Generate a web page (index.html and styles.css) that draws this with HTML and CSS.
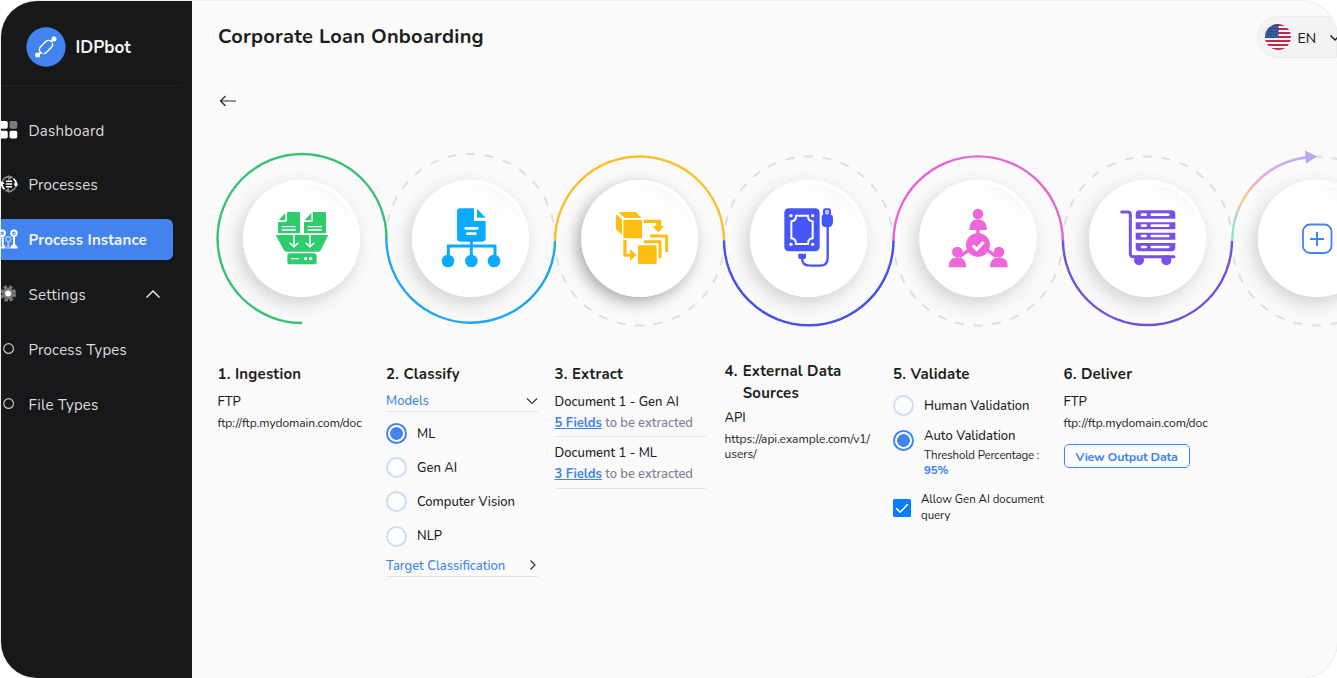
FILE: index.html
```html
<!DOCTYPE html>
<html lang="en">
<head>
<meta charset="utf-8">
<title>Corporate Loan Onboarding</title>
<link rel="stylesheet" href="styles.css">
</head>
<body>
<div class="app">
  <aside class="sidebar">
    <div class="brand">
      <svg class="brand-logo" viewBox="0 0 120 120">
        <circle cx="60" cy="60" r="59" fill="#4283ee"/>
        <g fill="none" stroke="#fff" stroke-width="4.500" stroke-linecap="round" transform="rotate(-45 60 60)">
          <rect x="37" y="48" width="46" height="24" rx="12" stroke-dasharray="40 7"/>
          <path d="M29 60h8M83 60h8"/>
        </g>
        <circle cx="35" cy="84" r="7.500" fill="#fff"/><circle cx="84" cy="36" r="7.500" fill="#fff"/>
      </svg>
      <span class="brand-name">IDPbot</span>
    </div>
    <nav class="nav">
      <a class="nav-item">
        <svg class="nav-icon" viewBox="0 0 20 20"><g fill="#fff"><rect x="0" y="0" width="8.600" height="8.600" rx="2"/><rect x="0" y="10.800" width="8.600" height="8.600" rx="2"/><rect x="10.600" y="10.800" width="8.600" height="8.600" rx="2"/></g><rect x="10.600" y="0" width="8.600" height="8.600" rx="2" fill="#7b7c7d"/></svg>
        <span>Dashboard</span></a>
      <a class="nav-item">
        <svg class="nav-icon" viewBox="0 0 20 20" fill="none" stroke-width="2"><path d="M3 6A8 8 0 0 1 14 3M17 14A8 8 0 0 1 6 17" stroke="#88898a"/><path d="M15 4a8 8 0 0 1 3 7M5 16a8 8 0 0 1-3-7" stroke="#fff"/><path d="M9 0l4 3-4 3zM10 14v6l-4-3z" fill="#88898a"/><path d="M15 9.500h5.500l-2.800 4.500zM0 10h5L2.500 6z" fill="#fff"/><path d="M6.500 7h7M6.500 10h7M6.500 13h7" stroke="#fff" stroke-width="1.600"/></svg>
        <span>Processes</span></a>
      <a class="nav-item active">
        <svg class="nav-icon tall" viewBox="0 0 20 22" fill="none" stroke="#fff"><circle cx="2.500" cy="4" r="3" stroke-width="2.200"/><circle cx="15.500" cy="4" r="3" stroke-width="2.200"/><path d="M3 7v11M15.500 7v11M0 20h6M12 20h7.500M3 17l2.500 2.500M15.500 16.500l3 3M15.500 16.500l-3 3" stroke-width="2.200"/><g stroke="#9dbdf7"><circle cx="9.300" cy="10.500" r="2.700" stroke-width="1.900"/><path d="M9.300 13v7M7 20h4.500" stroke-width="2.400"/></g><path d="M1.500 4l1 1 2-2M14.500 4l1 1 2-2" stroke-width=".8"/></svg>
        <span>Process Instance</span></a>
      <a class="nav-item">
        <svg class="nav-icon" viewBox="0 0 20 20"><circle cx="9" cy="9.500" r="6.400" fill="#77787a"/><circle cx="9" cy="9.500" r="7" fill="none" stroke="#77787a" stroke-width="4" stroke-dasharray="3.600 1.900"/><circle cx="9" cy="9.500" r="3.300" fill="#fff"/></svg>
        <span>Settings</span>
        <svg class="nav-caret" viewBox="0 0 16 10"><path d="M1.500 8.500L8 2l6.500 6.500" fill="none" stroke="#e5e5e6" stroke-width="1.500"/></svg></a>
      <a class="nav-item">
        <svg class="nav-icon" viewBox="0 0 20 20"><circle cx="9.600" cy="9.500" r="5.400" fill="none" stroke="#c9c9ca" stroke-width="1.300"/></svg>
        <span>Process Types</span></a>
      <a class="nav-item">
        <svg class="nav-icon" viewBox="0 0 20 20"><circle cx="9.600" cy="9.500" r="5.400" fill="none" stroke="#c9c9ca" stroke-width="1.300"/></svg>
        <span>File Types</span></a>
    </nav>
  </aside>

  <main class="main">
    <header class="topbar">
      <h1 class="title">Corporate Loan Onboarding</h1>
      <div class="lang">
        <svg class="flag" viewBox="0 0 26 26">
          <defs><clipPath id="flagClip"><circle cx="13" cy="13" r="13"/></clipPath></defs>
          <g clip-path="url(#flagClip)">
            <rect width="26" height="26" fill="#f7f3f5"/>
            <path d="M0 1h26M0 5h26M0 9h26M0 13h26M0 17h26M0 21h26M0 25h26" stroke="#c0294a" stroke-width="2"/>
            <rect width="13.500" height="14" fill="#2b4c8c"/>
            <path d="M3 3h10M2 6h11M1 9h12M1 12h12" stroke="#8fa5cc" stroke-width=".9" stroke-dasharray="1 1.800"/>
          </g>
        </svg>
        <span class="lang-code">EN</span>
        <svg class="lang-caret" viewBox="0 0 12 8"><path d="M1.500 1.500L6 6l4.500-4.500" fill="none" stroke="#222" stroke-width="1.500"/></svg>
      </div>
    </header>
    <svg class="back" viewBox="0 0 18 14" fill="none" stroke="#28292b" stroke-width="1.200"><path d="M17 7H1.500M6.500 2L1.500 7l5 5"/></svg>

    <svg class="flow" viewBox="192 140 1145 200" fill="none">
      <defs>
        <filter id="drop" x="-40%" y="-40%" width="180%" height="180%"><feDropShadow dx="-4" dy="6" stdDeviation="8.500" flood-color="#000" flood-opacity=".17"/></filter>
        <filter id="dropStrong" x="-40%" y="-40%" width="180%" height="180%"><feDropShadow dx="-4" dy="5" stdDeviation="7.500" flood-color="#000" flood-opacity=".32"/></filter>
        <linearGradient id="bevel" x1=".75" y1="0" x2=".35" y2=".6"><stop offset="0" stop-color="#f6f6f6"/><stop offset=".3" stop-color="#fff"/></linearGradient>
        <linearGradient id="rainbow" gradientUnits="userSpaceOnUse" x1="1232" y1="241" x2="1310" y2="157"><stop offset="0" stop-color="#93e8b8"/><stop offset=".18" stop-color="#a9d3ee"/><stop offset=".34" stop-color="#f8cd84"/><stop offset=".56" stop-color="#f2a5c8"/><stop offset=".78" stop-color="#c9aef3"/><stop offset="1" stop-color="#b9a5f4"/></linearGradient>
        <g id="disc"><circle r="58.500" fill="#fff"/><circle r="55" fill="url(#bevel)"/></g>
      </defs>
      <g>
        <use href="#disc" x="301.500" y="238.500" filter="url(#drop)"/>
        <use href="#disc" x="470.500" y="238.500" filter="url(#drop)"/>
        <use href="#disc" x="639.700" y="238.500" filter="url(#dropStrong)"/>
        <use href="#disc" x="808.500" y="238.500" filter="url(#drop)"/>
        <use href="#disc" x="978" y="238.500" filter="url(#drop)"/>
        <use href="#disc" x="1147.500" y="238.500" filter="url(#drop)"/>
        <use href="#disc" x="1316.500" y="238.500" filter="url(#drop)"/>
      </g>
      <g stroke="#dedede" stroke-width="2" stroke-dasharray="9 9.700" stroke-dashoffset="2.800">
        <path d="M386 238.500a84.500 84.500 0 0 1 169 0M555 241a84.500 84.500 0 0 0 169 0M724 241a84.500 84.500 0 0 1 169 0M893.500 241a84.500 84.500 0 0 0 169 0M1063 241a84.500 84.500 0 0 1 169 0M1232 241a84.500 84.500 0 0 0 169 0"/>
        <path d="M1316 156.500a84.500 84.500 0 0 1 60 25"/>
      </g>
      <g stroke-width="2.400">
        <path d="M302 323a84.500 84.500 0 1 1 84.500-84.500" stroke="#36c270"/>
        <path d="M386.300 238A84.300 84.700 0 0 0 470.600 322.700A84.400 82.200 0 0 0 555 240.500" stroke="#1fa6f2"/>
        <path d="M555 241a84.500 84.500 0 0 1 169 0" stroke="#f9bf2a"/>
        <path d="M724 240.500a84.700 84.700 0 0 0 169.500 0" stroke="#4551e8"/>
        <path d="M893.500 241a84.500 84.500 0 0 1 169.300 0" stroke="#e765d2"/>
        <path d="M1063 240.500a84.500 84.500 0 0 0 169 0" stroke="#7150dc"/>
        <path d="M1232.300 241A84.500 84.500 0 0 1 1306 157.500" stroke="url(#rainbow)"/>
      </g>
      <path d="M1305 150.500l12 6-11 7z" fill="#b9a5f4"/>

      <g transform="translate(210 140) scale(.33333)">
        <path d="M231 216h35q4 0 4 4v60h-66v-34h21q6 0 6-6zM226 219v22h-20zM309 216h35q4 0 4 4v60h-66v-34h21q6 0 6-6zM304 219v22h-20z" fill="#2fcb6c"/>
        <path d="M197 285h158l-23 46q-2 4-7 4h-96q-5 0-7-4z" fill="#2fcb6c"/>
        <rect x="232" y="340" width="88" height="33" rx="8" fill="#2fcb6c"/>
        <path d="M215 260h42M215 270h42M293 260h42M293 270h42M243 356h24" stroke="#fff" stroke-width="4"/>
        <path d="M252 283v37M239 308l13 13 13-13M300 283v37M287 308l13 13 13-13" stroke="#fff" stroke-width="4.500"/>
        <circle cx="287" cy="356" r="5" fill="#fff"/><circle cx="302" cy="356" r="5" fill="#fff"/>
      </g>
      <g transform="translate(380 140) scale(.33333)">
        <path d="M241 205h41v38h35v52q0 10-10 10h-66q-10 0-10-10v-80q0-10 10-10zM291 206l26 27h-26z" fill="#0baaff"/>
        <path d="M257 265h35M262 281h24" stroke="#fff" stroke-width="8" stroke-linecap="round"/>
        <path d="M274 300v54M205 354v-36h140v36" stroke="#0baaff" stroke-width="9"/>
        <g fill="#0baaff"><circle cx="204" cy="363" r="19"/><circle cx="274" cy="363" r="19"/><circle cx="342" cy="363" r="19"/></g>
      </g>
      <g transform="translate(550 140) scale(.33333)" fill="#fdbd13">
        <path d="M205 216h53l16 18h-50zM198 222l18 17v45l-16-14q-2-2-2-5z"/>
        <rect x="220" y="239" width="56" height="56" rx="4"/>
        <rect x="264" y="316" width="56" height="56" rx="4"/>
        <path d="M281 239h48q5 0 5 5v14h9l-18 19-18-19h12v-9h-38zM220 300h10v41h10v-14l19 18-19 18v-13h-15q-5 0-5-5z"/>
        <path d="M282 305h48v50M300 288h50v48" fill="none" stroke="#fdbd13" stroke-width="9" stroke-linejoin="round"/>
      </g>
      <g transform="translate(720 140) scale(.33333)">
        <rect x="193" y="205" width="106" height="129" rx="13" fill="#4655f6"/>
        <path d="M228 227h36q0 16 14 17v51q-14 1-14 17h-36q0-16-14-17v-51q14-1 14-17z" stroke="#fff" stroke-width="6"/>
        <g fill="#fff"><circle cx="213" cy="227" r="5"/><circle cx="278" cy="227" r="5"/><circle cx="213" cy="313" r="5"/><circle cx="278" cy="313" r="5"/></g>
        <path d="M235 341h23v11q0 5-5 5h-13q-5 0-5-5z" fill="#4655f6"/>
        <path d="M246 354q0 23 24 23h29q24 0 24-24v-98" stroke="#4655f6" stroke-width="7"/>
        <path d="M309 224v-12q0-7 7-7h10q7 0 7 7v12q6 1 6 8v13q0 17-18 17t-16-17v-13q0-7 4-8z" fill="#4655f6"/>
        <rect x="316" y="211" width="10" height="12" rx="3" fill="#fff"/><circle cx="321" cy="217" r="2.500" fill="#4655f6"/>
      </g>
      <g transform="translate(888 140) scale(.33333)">
        <path d="M270 260v50l-55 40M270 310l55 40" stroke="#ec67d8" stroke-width="10"/>
        <g fill="#ec67d8"><circle cx="270" cy="315" r="36"/>
        <circle cx="270" cy="222" r="16"/><path d="M244 270q0-32 26-32t27 32z"/>
        <circle cx="208" cy="336" r="16"/><path d="M182 382q0-30 26-30t27 30z"/>
        <circle cx="333" cy="336" r="16"/><path d="M306 382q0-30 27-30t26 30z"/></g>
        <path d="M254 316l12 12 21-22" stroke="#fff" stroke-width="9"/>
      </g>
      <g transform="translate(1057 140) scale(.33333)">
        <path d="M194 216h19q7 0 7 8v117q0 9 9 9h122" stroke="#7651e4" stroke-width="9" stroke-linecap="round"/>
        <path d="M247 211h97q11 0 11 11v14H236v-14q0-11 11-11zM236 247h119v21H236zM236 278h119v21H236zM236 309h119v13q0 12-11 12h-97q-11 0-11-12z" fill="#7651e4"/>
        <path d="M255 224h11M284 224h50M255 257h11M284 257h50M255 288h11M284 288h50M255 321h11M284 321h50" stroke="#fff" stroke-width="8" stroke-linecap="round"/>
        <circle cx="246" cy="361" r="15" fill="#7651e4"/><circle cx="328" cy="361" r="15" fill="#7651e4"/>
      </g>
      <g stroke="#4283ee" stroke-width="1.800"><rect x="1303" y="224.500" width="28.500" height="28.500" rx="7"/><path d="M1317 232v14M1310 239h14" stroke-width="2"/></g>
    </svg>

    <section class="steps">
      <div class="step">
        <h2 class="step-title">1. Ingestion</h2>
        <p class="kind">FTP</p>
        <p class="url">ftp://ftp.mydomain.com/doc</p>
      </div>
      <div class="step">
        <h2 class="step-title">2. Classify</h2>
        <div class="fold"><span>Models</span><svg class="caret-down" viewBox="0 0 12 8"><path d="M1 1.500l5 5 5-5" fill="none" stroke="#333" stroke-width="1.200"/></svg></div>
        <div class="options">
          <div class="option"><i class="radio on"></i><span>ML</span></div>
          <div class="option"><i class="radio"></i><span>Gen AI</span></div>
          <div class="option"><i class="radio"></i><span>Computer Vision</span></div>
          <div class="option"><i class="radio"></i><span>NLP</span></div>
        </div>
        <div class="fold target"><span>Target Classification</span><svg class="caret-right" viewBox="0 0 8 12"><path d="M1.500 1.500L6 6l-4.500 4.500" fill="none" stroke="#333" stroke-width="1.200"/></svg></div>
      </div>
      <div class="step">
        <h2 class="step-title">3. Extract</h2>
        <div class="doc first"><p>Document 1 - Gen AI</p><p class="doc-info"><a class="fields">5 Fields</a> to be extracted</p></div>
        <div class="doc"><p>Document 1 - ML</p><p class="doc-info"><a class="fields">3 Fields</a> to be extracted</p></div>
      </div>
      <div class="step external">
        <h2 class="step-title wrap"><span>4.</span><span>External Data Sources</span></h2>
        <p class="kind api">API</p>
        <p class="url">https://api.example.com/v1/<br>users/</p>
      </div>
      <div class="step">
        <h2 class="step-title">5. Validate</h2>
        <div class="check-row human"><i class="radio"></i><span>Human Validation</span></div>
        <div class="check-row auto"><i class="radio on"></i><div><p>Auto Validation</p><p class="threshold">Threshold Percentage :<br><b>95%</b></p></div></div>
        <div class="allow"><svg class="checkbox" viewBox="0 0 18 18"><rect width="18" height="18" rx="1.500" fill="#087cff"/><path d="M3.200 9.200l4 4 7.500-8" fill="none" stroke="#fff" stroke-width="1.600"/></svg><p>Allow Gen AI document query</p></div>
      </div>
      <div class="step">
        <h2 class="step-title">6. Deliver</h2>
        <p class="kind">FTP</p>
        <p class="url">ftp://ftp.mydomain.com/doc</p>
        <button class="output">View Output Data</button>
      </div>
    </section>
  </main>
</div>
</body>
</html>
```
FILE: styles.css
```css
* { box-sizing: border-box; }
body { margin: 0; background: #fff; font-family: Nunito, Lato, "Open Sans", sans-serif; color: #1d1e20; overflow: hidden; }
h1, h2, p { margin: 0; }
svg { display: block; flex: none; }
.app { display: flex; height: 677px; margin: 1px 0 0 1px; background: #fafafa; border-radius: 36px; overflow: hidden; box-shadow: 0 0 0 1px #ededed; }

.sidebar { width: 191px; flex: none; background: #17181a; }
.brand { display: flex; align-items: center; gap: 10px; height: 85px; width: 179px; padding: 7px 0 0 24.500px; border-bottom: 1px solid #232426; }
.brand-logo { width: 40px; height: 40px; }
.brand-name { padding-top: 2px; font-size: 17px; font-weight: 700; color: #f4f4f4; }
.nav { display: flex; flex-direction: column; gap: 13.900px; margin-top: 23px; }
.nav-item { display: flex; align-items: center; width: 172px; height: 41px; font-size: 15px; color: #dcdcdd; letter-spacing: .22px; }
.nav-item span { padding-top: 2px; }
.nav-icon { width: 18px; height: 18px; margin: 0 11px 0 -1.500px; }
.nav-icon.tall { height: 21px; }
.nav-caret { width: 16px; height: 10px; margin: 0 12.500px 0 auto; }
.active { background: #4283ee; border-radius: 0 6px 6px 0; color: #eef3fe; font-weight: 700; letter-spacing: .15px; }

.main { flex: 1; min-width: 0; }
.topbar { display: flex; justify-content: space-between; height: 57px; padding: 15px 0 0 26px; }
.title { font-size: 20px; line-height: 42px; font-weight: 700; letter-spacing: .26px; }
.lang { display: flex; align-items: center; gap: 7px; width: 80px; height: 42px; padding-left: 6.500px; border-radius: 21px 0 0 21px; background: #f3f3f5; border: 1px solid #ececef; }
.lang-code { padding-top: 2px; font-size: 14px; font-weight: 500; }
.flag { width: 26px; height: 26px; }
.lang-caret { width: 12px; height: 8px; margin: 2px 0 0 6px; }
.back { width: 18px; height: 14px; margin: 36px 0 0 26.500px; }
.flow { width: 1145px; height: 200px; margin-top: 32px; }

.steps { display: grid; grid-template-columns: 168.500px 168.500px 170px 168.500px 170.500px 150px; padding-left: 25.500px; margin-top: 22px; }
.step-title { font-size: 15px; line-height: 24px; font-weight: 700; letter-spacing: .2px; }
.kind { font-size: 13px; line-height: 18px; margin-top: 7px; font-weight: 500; }
.url { font-size: 12px; line-height: 15px; margin-top: 5px; letter-spacing: -.03px; white-space: nowrap; }
.fold { display: flex; align-items: center; justify-content: space-between; width: 152px; height: 22px; margin-top: 4px; border-bottom: 1px solid #e3e3e5; font-size: 13px; font-weight: 500; color: #4283ee; }
.fold span { padding-top: 1px; }
.caret-down { width: 12px; height: 8px; }
.caret-right { width: 8px; height: 12px; margin-right: 1px; }
.options { display: flex; flex-direction: column; gap: 13.200px; margin-top: 11px; }
.option { display: flex; align-items: center; gap: 10px; height: 21px; font-size: 13px; font-weight: 500; }
.radio { flex: none; width: 21px; height: 21px; border: 2px solid #cfdcf8; border-radius: 50%; background: #fcfdff; }
.radio.on { border: 2px solid #4283ee; background: radial-gradient(circle, #4283ee 6px, #fff 6.700px); }
.target { margin-top: 8px; }
.doc { width: 151px; height: 52px; padding-top: 7px; border-bottom: 1px solid #e3e3e5; font-size: 13px; line-height: 18px; font-weight: 500; }
.doc.first { height: 51px; }
.doc-info { margin-top: 3px; color: #7d8097; letter-spacing: -.05px; }
.fields { color: #4283ee; font-weight: 700; text-decoration: underline; }
.external { margin-top: -1px; }
.wrap { display: flex; gap: 5px; width: 140px; line-height: 21.500px; }
.api { margin-top: 5px; }
.check-row { display: flex; gap: 10px; font-size: 13px; font-weight: 500; line-height: 18px; }
.human { align-items: center; height: 21px; margin-top: 9px; }
.auto { margin-top: 11px; }
.auto .radio { margin-top: 3px; }
.threshold { font-size: 11.500px; line-height: 15px; margin-top: 3px; font-weight: 400; letter-spacing: -.17px; }
.threshold b { color: #4283ee; }
.allow { display: flex; align-items: center; gap: 10px; width: 160px; margin-top: 14px; font-size: 11.500px; line-height: 15.500px; letter-spacing: -.05px; }
.allow p { width: 124px; }
.checkbox { width: 18px; height: 18px; }
.output { display: block; width: 126px; height: 24px; margin-top: 13px; padding: 0; border: 1px solid #4283ee; border-radius: 5px; background: #fcfdff; color: #4283ee; font: 700 12.500px Nunito, Lato, sans-serif; letter-spacing: -.25px; }
```
